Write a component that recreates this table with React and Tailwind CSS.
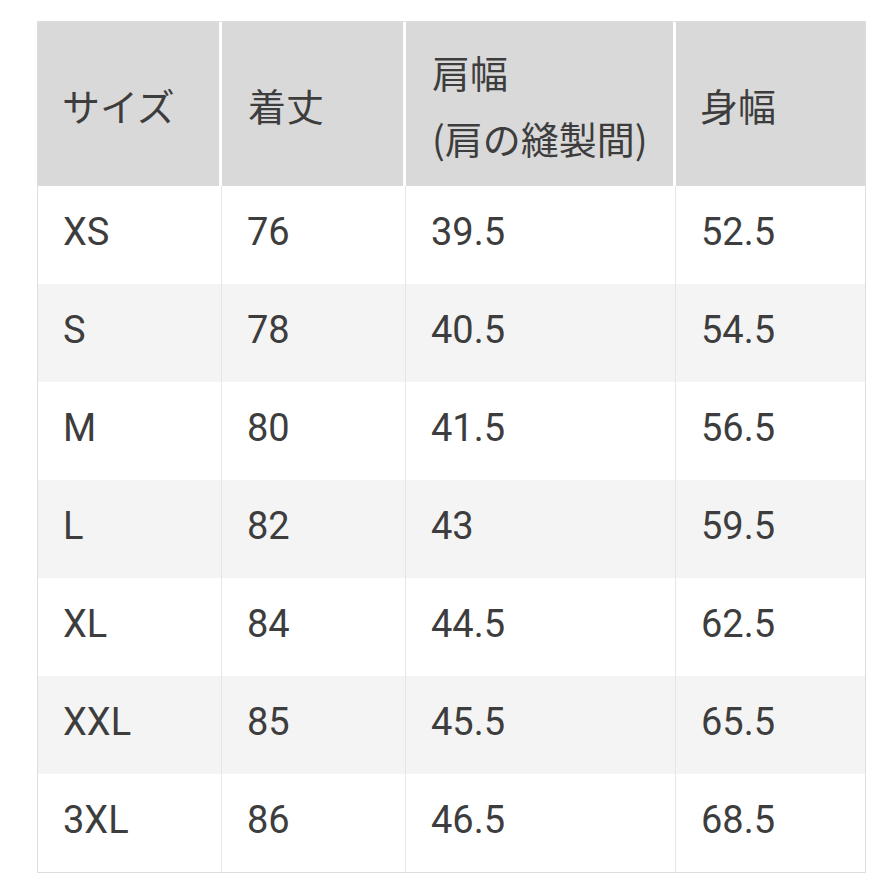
const rows = [
  ["XS", "76", "39.5", "52.5"],
  ["S", "78", "40.5", "54.5"],
  ["M", "80", "41.5", "56.5"],
  ["L", "82", "43", "59.5"],
  ["XL", "84", "44.5", "62.5"],
  ["XXL", "85", "45.5", "65.5"],
  ["3XL", "86", "46.5", "68.5"],
];

const cols = "grid grid-cols-[184px_184px_270px_189px]";

const App = () => {
  return (
    <div className="w-[895px] h-[895px] bg-white pt-[21px] pl-[37px] font-['Roboto','Noto_Sans_CJK_JP',sans-serif] text-[#3d3d3d]">
      <div className="w-[829px] border border-[#dedede]">
        {/* header */}
        <div className={`${cols} h-[164px] text-[38px] font-['Noto_Sans_CJK_JP',sans-serif]`}>
          <div className="bg-[#d9d9d9] border-r-[3px] border-white flex items-center pl-[24px]">
            サイズ
          </div>
          <div className="bg-[#d9d9d9] border-r-[3px] border-white flex items-center pl-[26px]">
            着丈
          </div>
          <div className="bg-[#d9d9d9] border-r-[3px] border-white flex flex-col justify-center pl-[26px] leading-[66px] pt-[2px]">
            <span>肩幅</span>
            <span>(肩の縫製間)</span>
          </div>
          <div className="bg-[#d9d9d9] flex items-center pl-[24px]">身幅</div>
        </div>
        {rows.map((r, i) => (
          <div
            key={r[0]}
            className={`${cols} h-[98px] text-[38px] ${
              i % 2 === 1 ? "bg-[#f4f4f4]" : "bg-white"
            }`}
          >
            {r.map((c, j) => (
              <div
                key={j}
                className={`flex items-center pl-[25px] pb-[5px] ${
                  j < 3 ? "border-r border-[#e6e6e6]" : ""
                }`}
              >
                {c}
              </div>
            ))}
          </div>
        ))}
      </div>
    </div>
  );
};

export default App;
